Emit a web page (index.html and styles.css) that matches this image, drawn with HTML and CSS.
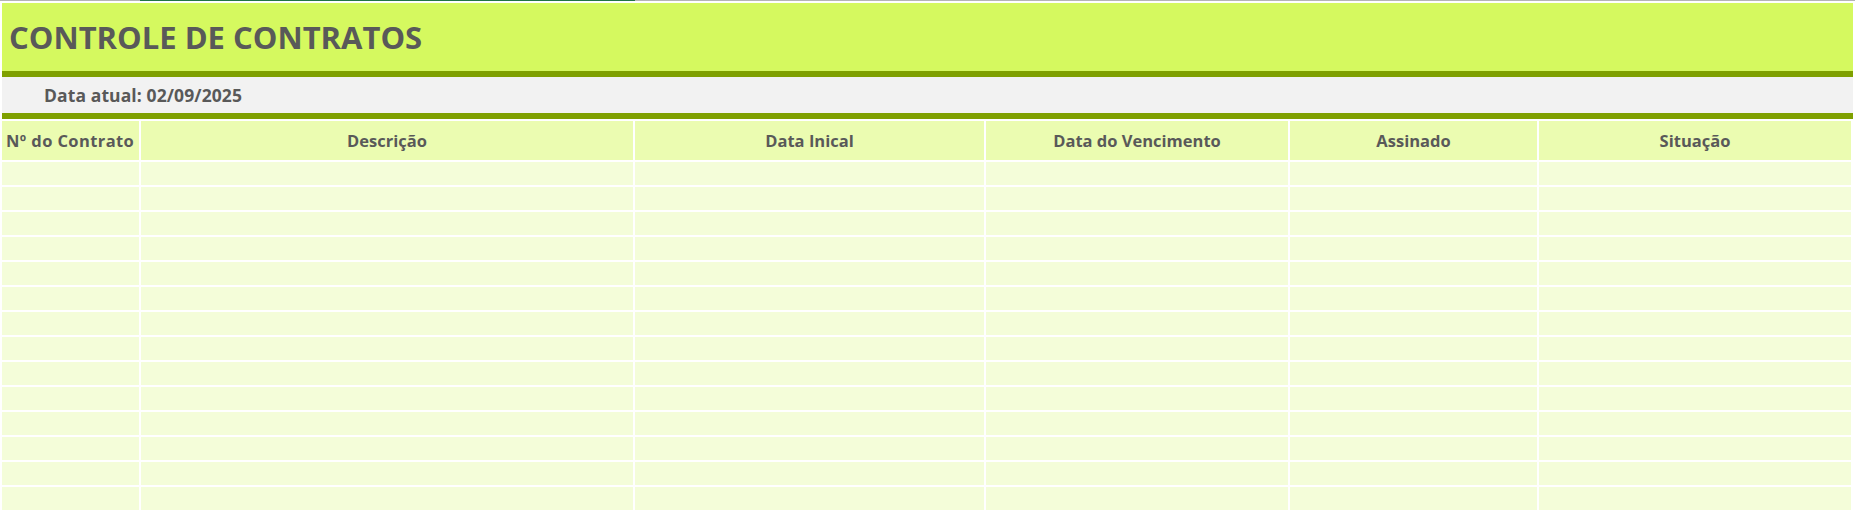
FILE: index.html
```html
<!DOCTYPE html>
<html lang="pt">
<head>
<meta charset="utf-8">
<title>Controle de Contratos</title>
<link rel="stylesheet" href="styles.css">
</head>
<body>
<div class="top-line"><span class="top-sel"></span></div>
<div class="sheet">
  <div class="title-band"><h1 class="title">CONTROLE DE CONTRATOS</h1></div>
  <div class="bar"></div>
  <div class="date-band"><span class="date-text">Data atual: 02/09/2025</span></div>
  <div class="bar"></div>
  <div class="table">
    <div class="th th-left">Nº do Contrato</div>
    <div class="th">Descrição</div>
    <div class="th">Data Inical</div>
    <div class="th">Data do Vencimento</div>
    <div class="th">Assinado</div>
    <div class="th">Situação</div>
    <div class="td"></div><div class="td"></div><div class="td"></div><div class="td"></div><div class="td"></div><div class="td"></div>
    <div class="td"></div><div class="td"></div><div class="td"></div><div class="td"></div><div class="td"></div><div class="td"></div>
    <div class="td"></div><div class="td"></div><div class="td"></div><div class="td"></div><div class="td"></div><div class="td"></div>
    <div class="td"></div><div class="td"></div><div class="td"></div><div class="td"></div><div class="td"></div><div class="td"></div>
    <div class="td"></div><div class="td"></div><div class="td"></div><div class="td"></div><div class="td"></div><div class="td"></div>
    <div class="td"></div><div class="td"></div><div class="td"></div><div class="td"></div><div class="td"></div><div class="td"></div>
    <div class="td"></div><div class="td"></div><div class="td"></div><div class="td"></div><div class="td"></div><div class="td"></div>
    <div class="td"></div><div class="td"></div><div class="td"></div><div class="td"></div><div class="td"></div><div class="td"></div>
    <div class="td"></div><div class="td"></div><div class="td"></div><div class="td"></div><div class="td"></div><div class="td"></div>
    <div class="td"></div><div class="td"></div><div class="td"></div><div class="td"></div><div class="td"></div><div class="td"></div>
    <div class="td"></div><div class="td"></div><div class="td"></div><div class="td"></div><div class="td"></div><div class="td"></div>
    <div class="td"></div><div class="td"></div><div class="td"></div><div class="td"></div><div class="td"></div><div class="td"></div>
    <div class="td"></div><div class="td"></div><div class="td"></div><div class="td"></div><div class="td"></div><div class="td"></div>
    <div class="td"></div><div class="td"></div><div class="td"></div><div class="td"></div><div class="td"></div><div class="td"></div>
  </div>
</div>
</body>
</html>
```
FILE: styles.css
```css
* { box-sizing: border-box; }
html, body { margin: 0; padding: 0; background: #ffffff; }
body { width: 1855px; height: 510px; overflow: hidden; font-family: "Open Sans", "Liberation Sans", sans-serif; color: #595959; }
.top-line { height: 1px; background: #b4b4b4; display: flex; }
.top-sel { display: block; margin-left: 140px; width: 495px; height: 1px; background: #217346; }
.sheet { padding: 2px 2px 0 2px; }
.title-band { height: 68px; background: #d5f95f; display: flex; align-items: center; padding-left: 7px; }
.title { margin: 0; font-size: 31px; font-weight: 700; letter-spacing: 0; line-height: 1; }
.bar { height: 6px; background: #7fa000; }
.date-band { height: 36px; background: #f2f2f2; display: flex; align-items: center; padding-left: 42px; }
.date-text { font-size: 17.5px; font-weight: 700; letter-spacing: 0.1px; }
.table { margin-top: 2px; display: grid; grid-template-columns: 137px 492px 349px 302px 247px 312px; grid-template-rows: 39px; grid-auto-rows: 23px; gap: 2px; }
.th { background: #ebfcb1; display: flex; align-items: center; justify-content: center; font-size: 16.5px; font-weight: 700; white-space: nowrap; }
.th-left { justify-content: flex-start; padding-left: 4px; letter-spacing: 0.4px; }
.td { background: #f4fdd9; }
```
